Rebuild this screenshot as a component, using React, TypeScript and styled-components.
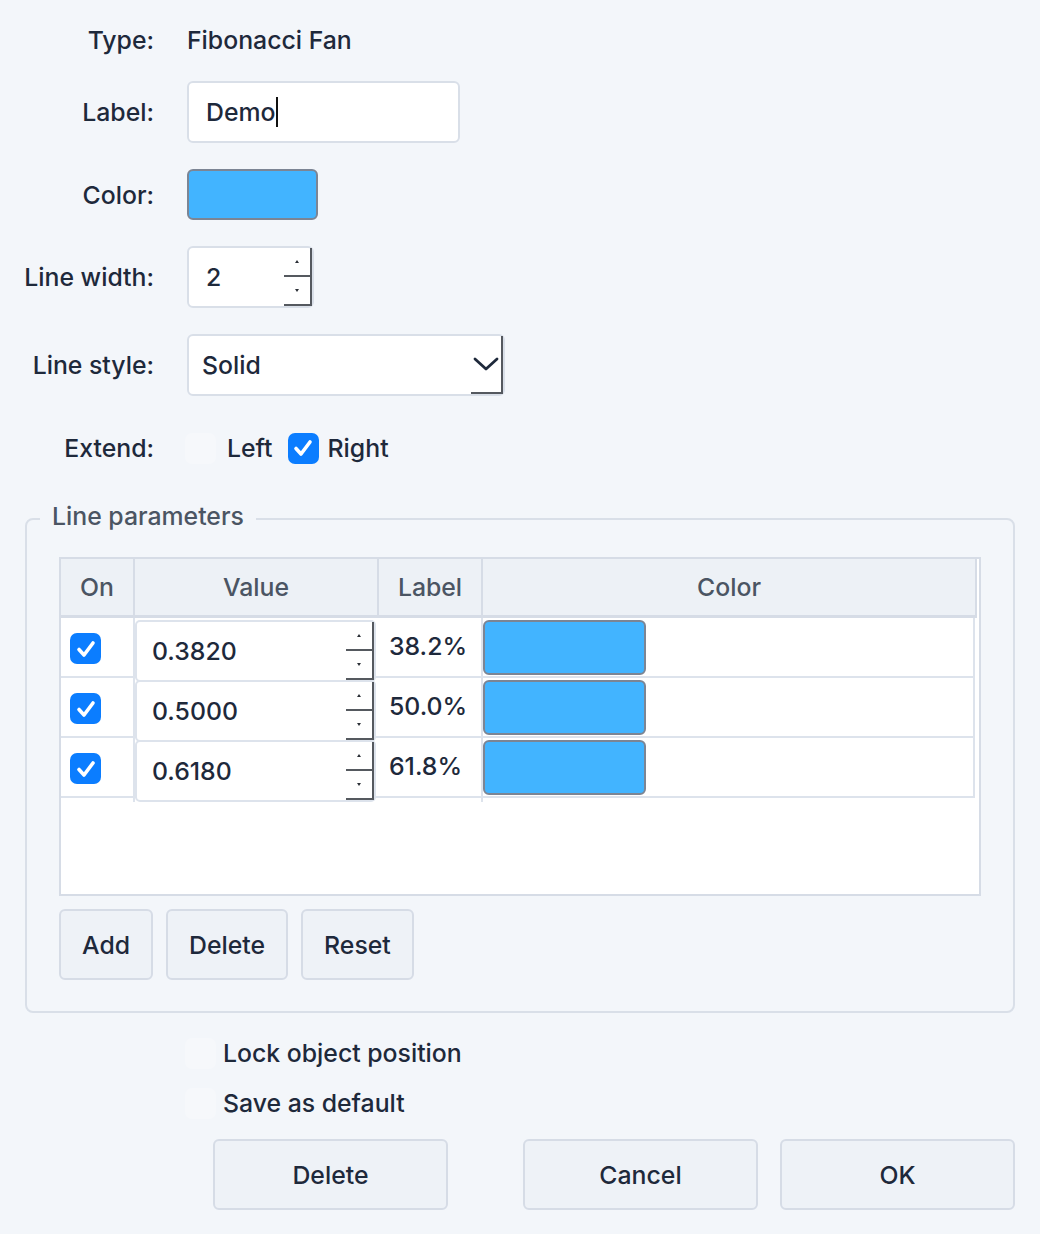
import React from "react";
import styled, { createGlobalStyle } from "styled-components";

const GlobalStyle = createGlobalStyle`
  * { box-sizing: border-box; }
  html, body {
    margin: 0;
    background: #f3f6fa;
  }
  body {
    font-family: Inter, "Noto Sans", sans-serif;
    font-size: 24.8px;
    font-weight: 500;
    color: #1e293b;
  }
`;

const Dialog = styled.div`
  width: 1040px;
  padding: 25px 25px 24px 15px;
`;

const FormGrid = styled.div`
  display: grid;
  grid-template-columns: 139px 1fr;
  column-gap: 33px;
  row-gap: 26px;
  align-items: center;
`;

const FieldLabel = styled.div<{ $offset?: number }>`
  text-align: right;
  line-height: 30px;
  white-space: nowrap;
  margin-top: ${(p) => p.$offset ?? 0}px;
`;

const FieldValue = styled.div<{ $offset?: number }>`
  display: flex;
  align-items: center;
  line-height: 30px;
  margin-top: ${(p) => p.$offset ?? 0}px;
`;

const TextBox = styled.div<{ $width: number }>`
  position: relative;
  display: flex;
  align-items: center;
  width: ${(p) => p.$width}px;
  height: 62px;
  padding-left: 17px;
  background: #fff;
  border: 2px solid #d9dfe8;
  border-radius: 6px;
`;

const Caret = styled.span`
  display: inline-block;
  width: 2px;
  height: 30px;
  margin-left: 1px;
  background: #111;
`;

const Swatch = styled.div<{ $w: number; $h: number }>`
  width: ${(p) => p.$w}px;
  height: ${(p) => p.$h}px;
  background: #42b4ff;
  border: 2px solid #7c8594;
  border-radius: 6px;
`;

const SpinButtons = styled.div`
  position: absolute;
  right: 0;
  top: 0;
  bottom: 0;
  width: 28px;
  display: flex;
  flex-direction: column;
`;

const SpinHalf = styled.div`
  flex: 1;
  display: flex;
  align-items: center;
  justify-content: center;
  border-right: 2px solid #55595f;
  border-bottom: 2px solid #55595f;
`;

const Arrow = styled.span<{ $down?: boolean }>`
  width: 0;
  height: 0;
  border-left: 2.5px solid transparent;
  border-right: 2.5px solid transparent;
  ${(p) =>
    p.$down
      ? "border-top: 3px solid #2b2f36;"
      : "border-bottom: 3px solid #2b2f36;"}
`;

const SelectBox = styled(TextBox)`
  padding-left: 13px;
`;

const SelectButton = styled.div`
  position: absolute;
  right: 0;
  top: 0;
  bottom: 0;
  width: 32px;
  display: flex;
  align-items: center;
  justify-content: center;
  border-right: 2px solid #55595f;
  border-bottom: 2px solid #55595f;
`;

const CheckRow = styled.div`
  display: flex;
  align-items: center;
  height: 32px;
`;

const Box = styled.span<{ $checked?: boolean }>`
  display: inline-flex;
  align-items: center;
  justify-content: center;
  flex: none;
  width: 31px;
  height: 31px;
  border-radius: 7px;
  background: ${(p) => (p.$checked ? "#0b7dff" : "#f6f8fb")};
`;

const CheckText = styled.span<{ $gap?: number }>`
  margin-left: ${(p) => p.$gap ?? 9}px;
  margin-right: 15px;
  line-height: 30px;
`;

const Fieldset = styled.fieldset`
  margin: 37px 0 0 10px;
  min-width: 0;
  padding: 20px 32px 31px;
  border: 2px solid #d9dfe8;
  border-radius: 8px;
`;

const Legend = styled.legend`
  margin-left: -19px;
  padding: 0 12px 6px;
  line-height: 30px;
  color: #4b5563;
`;

const Table = styled.div`
  height: 339px;
  background: #fff;
  border: 2px solid #d6dce6;
`;

const Cols = styled.div`
  display: grid;
  grid-template-columns: 74px 244px 104px 1fr;
`;

const HeadRow = styled(Cols)`
  height: 59px;
  background: #edf1f6;
  border-bottom: 3px solid #d6dce6;
  margin-right: 2px;
`;

const HeadCell = styled.div`
  display: flex;
  align-items: center;
  justify-content: center;
  color: #4b5563;
  border-right: 2px solid #d6dce6;
`;

const BodyRow = styled(Cols)`
  height: 60px;
  border-bottom: 2px solid #dde3ec;
  margin-right: 4px;
  border-right: 2px solid #dde3ec;
`;

const Cell = styled.div<{ $line?: boolean }>`
  display: flex;
  align-items: center;
  border-right: ${(p) => (p.$line ? "2px solid #dde3ec" : "none")};
`;

const OnCell = styled(Cell)`
  padding-left: 9px;
  padding-bottom: 3px;
`;

const ValueBox = styled.div`
  position: relative;
  display: flex;
  align-items: center;
  width: 241px;
  height: 62px;
  margin-top: 2px;
  padding-left: 15px;
  background: #fff;
  border: 2px solid #dde3ec;
  border-radius: 5px;
  align-self: flex-start;
`;

const LabelCell = styled(Cell)`
  padding-left: 10px;
  align-items: flex-start;
  padding-top: 13px;
`;

const SwatchCell = styled(Cell)`
  align-items: flex-start;
  padding-top: 2px;
`;

const ButtonRow = styled.div`
  display: flex;
  gap: 13px;
  margin-top: 13px;
`;

const Button = styled.button<{ $width?: number }>`
  height: 71px;
  width: ${(p) => (p.$width ? `${p.$width}px` : "auto")};
  padding: 0 21px;
  font: inherit;
  color: #1e293b;
  background: #eef2f7;
  border: 2px solid #d6dce6;
  border-radius: 6px;
`;

const Options = styled.div`
  display: flex;
  flex-direction: column;
  gap: 18px;
  margin-top: 24px;
  padding-left: 170px;
`;

const Footer = styled.div`
  display: flex;
  gap: 22px;
  margin-top: 20px;
  padding-left: 198px;
`;

const Spacer = styled.div`
  flex: 1;
`;

const Check = () => (
  <svg width="22" height="22" viewBox="0 0 22 22">
    <path
      d="M4 11.5 L9 17 L18 5"
      fill="none"
      stroke="#fff"
      strokeWidth="3.6"
      strokeLinecap="round"
      strokeLinejoin="round"
    />
  </svg>
);

const Spinner = () => (
  <SpinButtons>
    <SpinHalf>
      <Arrow />
    </SpinHalf>
    <SpinHalf>
      <Arrow $down />
    </SpinHalf>
  </SpinButtons>
);

const levels = [
  { value: "0.3820", label: "38.2%" },
  { value: "0.5000", label: "50.0%" },
  { value: "0.6180", label: "61.8%" },
];

const App: React.FC = () => {
  return (
    <Dialog>
      <GlobalStyle />
      <FormGrid>
        <FieldLabel>Type:</FieldLabel>
        <FieldValue>Fibonacci Fan</FieldValue>

        <FieldLabel>Label:</FieldLabel>
        <FieldValue>
          <TextBox $width={273}>
            Demo
            <Caret />
          </TextBox>
        </FieldValue>

        <FieldLabel>Color:</FieldLabel>
        <FieldValue>
          <Swatch $w={131} $h={51} />
        </FieldValue>

        <FieldLabel>Line width:</FieldLabel>
        <FieldValue>
          <TextBox $width={127}>
            2
            <Spinner />
          </TextBox>
        </FieldValue>

        <FieldLabel>Line style:</FieldLabel>
        <FieldValue>
          <SelectBox $width={318}>
            Solid
            <SelectButton>
              <svg width="26" height="16" viewBox="0 0 26 16">
                <path
                  d="M2 3 L13 13 L24 3"
                  fill="none"
                  stroke="#1e293b"
                  strokeWidth="2.8"
                  strokeLinecap="round"
                  strokeLinejoin="round"
                />
              </svg>
            </SelectButton>
          </SelectBox>
        </FieldValue>

        <FieldLabel $offset={10}>Extend:</FieldLabel>
        <FieldValue $offset={10}>
          <CheckRow>
            <Box style={{ marginLeft: -2 }} />
            <CheckText $gap={11}>Left</CheckText>
            <Box $checked>
              <Check />
            </Box>
            <CheckText>Right</CheckText>
          </CheckRow>
        </FieldValue>
      </FormGrid>

      <Fieldset>
        <Legend>Line parameters</Legend>
        <Table>
          <HeadRow>
            <HeadCell>On</HeadCell>
            <HeadCell>Value</HeadCell>
            <HeadCell>Label</HeadCell>
            <HeadCell>Color</HeadCell>
          </HeadRow>
          {levels.map((l) => (
            <BodyRow key={l.value}>
              <OnCell $line>
                <Box $checked>
                  <Check />
                </Box>
              </OnCell>
              <Cell>
                <ValueBox>
                  {l.value}
                  <Spinner />
                </ValueBox>
              </Cell>
              <LabelCell $line>{l.label}</LabelCell>
              <SwatchCell>
                <Swatch $w={163} $h={55} />
              </SwatchCell>
            </BodyRow>
          ))}
        </Table>
        <ButtonRow>
          <Button>Add</Button>
          <Button>Delete</Button>
          <Button>Reset</Button>
        </ButtonRow>
      </Fieldset>

      <Options>
        <CheckRow>
          <Box />
          <CheckText $gap={7}>Lock object position</CheckText>
        </CheckRow>
        <CheckRow>
          <Box />
          <CheckText $gap={7}>Save as default</CheckText>
        </CheckRow>
      </Options>

      <Footer>
        <Button $width={235}>Delete</Button>
        <Spacer />
        <Button $width={235}>Cancel</Button>
        <Button $width={235}>OK</Button>
      </Footer>
    </Dialog>
  );
};

export default App;
